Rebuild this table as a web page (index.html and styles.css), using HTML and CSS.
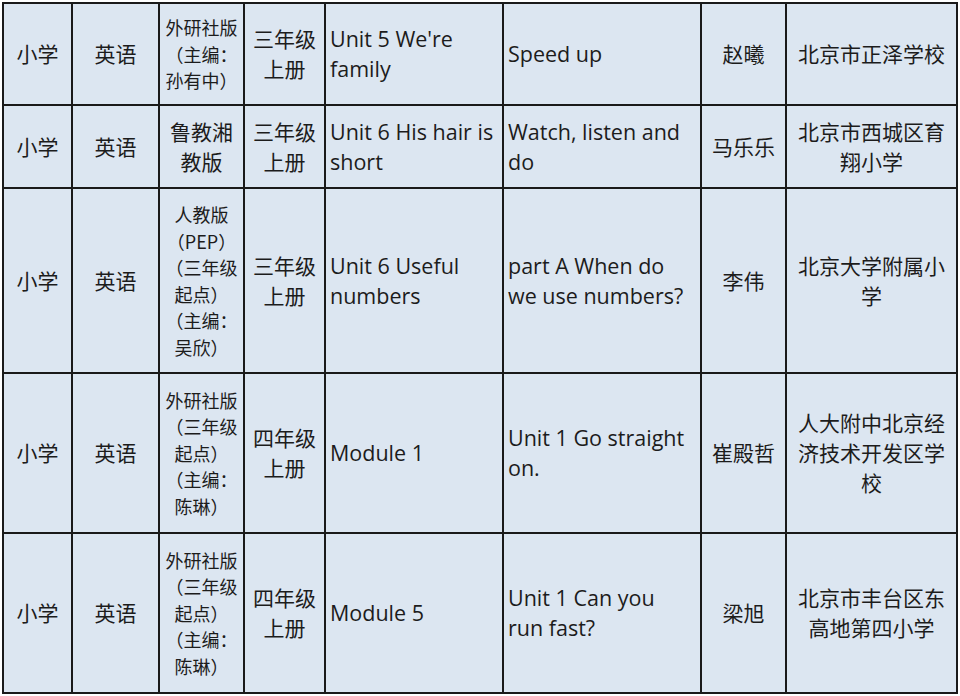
FILE: index.html
```html
<!DOCTYPE html>
<html lang="zh-CN">
<head>
<meta charset="utf-8">
<title>课程表</title>
<link rel="stylesheet" href="styles.css">
</head>
<body>
<table class="grid">
  <colgroup>
    <col class="c-stage"><col class="c-subject"><col class="c-book"><col class="c-grade">
    <col class="c-unit"><col class="c-lesson"><col class="c-teacher"><col class="c-school">
  </colgroup>
  <tbody>
    <tr class="r1">
      <td class="mid">小学</td>
      <td class="mid">英语</td>
      <td class="mid small">外研社版（主编：孙有中）</td>
      <td class="mid">三年级上册</td>
      <td class="left">Unit 5 We're family</td>
      <td class="left lesson">Speed up</td>
      <td class="mid">赵曦</td>
      <td class="mid">北京市正泽学校</td>
    </tr>
    <tr class="r2">
      <td class="mid">小学</td>
      <td class="mid">英语</td>
      <td class="mid">鲁教湘教版</td>
      <td class="mid">三年级上册</td>
      <td class="left">Unit 6 His hair is short</td>
      <td class="left lesson">Watch, listen and do</td>
      <td class="mid">马乐乐</td>
      <td class="mid">北京市西城区育翔小学</td>
    </tr>
    <tr class="r3">
      <td class="mid">小学</td>
      <td class="mid">英语</td>
      <td class="mid small">人教版（PEP）（三年级起点）（主编：吴欣）</td>
      <td class="mid">三年级上册</td>
      <td class="left">Unit 6 Useful numbers</td>
      <td class="left lesson">part A When do we use numbers?</td>
      <td class="mid">李伟</td>
      <td class="mid">北京大学附属小学</td>
    </tr>
    <tr class="r4">
      <td class="mid">小学</td>
      <td class="mid">英语</td>
      <td class="mid small">外研社版（三年级起点）（主编：陈琳）</td>
      <td class="mid">四年级上册</td>
      <td class="left">Module 1</td>
      <td class="left lesson">Unit 1 Go straight on.</td>
      <td class="mid">崔殿哲</td>
      <td class="mid">人大附中北京经济技术开发区学校</td>
    </tr>
    <tr class="r5">
      <td class="mid">小学</td>
      <td class="mid">英语</td>
      <td class="mid small">外研社版（三年级起点）（主编：陈琳）</td>
      <td class="mid">四年级上册</td>
      <td class="left">Module 5</td>
      <td class="left lesson">Unit 1 Can you run fast?</td>
      <td class="mid">梁旭</td>
      <td class="mid">北京市丰台区东高地第四小学</td>
    </tr>
  </tbody>
</table>
</body>
</html>
```

FILE: styles.css
```css
html, body {
  margin: 0;
  padding: 0;
  background: #ffffff;
}

body {
  padding: 2px 0 0 2px;
  font-family: "Open Sans", "Noto Sans CJK SC", sans-serif;
  color: #1c1c1c;
}

.grid {
  border-collapse: collapse;
  table-layout: fixed;
  width: 956px;
  background: #dce6f1;
  border: 2px solid #1a1a1a;
}

.c-stage { width: 69px; }
.c-subject { width: 87px; }
.c-book { width: 85px; }
.c-grade { width: 81px; }
.c-unit { width: 178px; }
.c-lesson { width: 198px; }
.c-teacher { width: 85px; }
.c-school { width: 171px; }

.grid td {
  border: 2px solid #1a1a1a;
  font-size: 21px;
  line-height: 30px;
  vertical-align: middle;
  padding: 0 4px;
  word-wrap: break-word;
}

.grid td.mid {
  text-align: center;
}

.grid td.left {
  text-align: left;
  font-size: 21.5px;
  padding: 0 3px 0 4px;
}

.grid td.lesson {
  padding-right: 12px;
}

.grid td.small {
  font-family: "Noto Sans CJK KR", "Noto Sans CJK SC", sans-serif;
  font-size: 18px;
  line-height: 26.5px;
  padding: 0 4px;
}

.r1 { height: 102px; }
.r2 { height: 83px; }
.r3 { height: 185px; }
.r4 { height: 160px; }
.r5 { height: 160px; }
```
